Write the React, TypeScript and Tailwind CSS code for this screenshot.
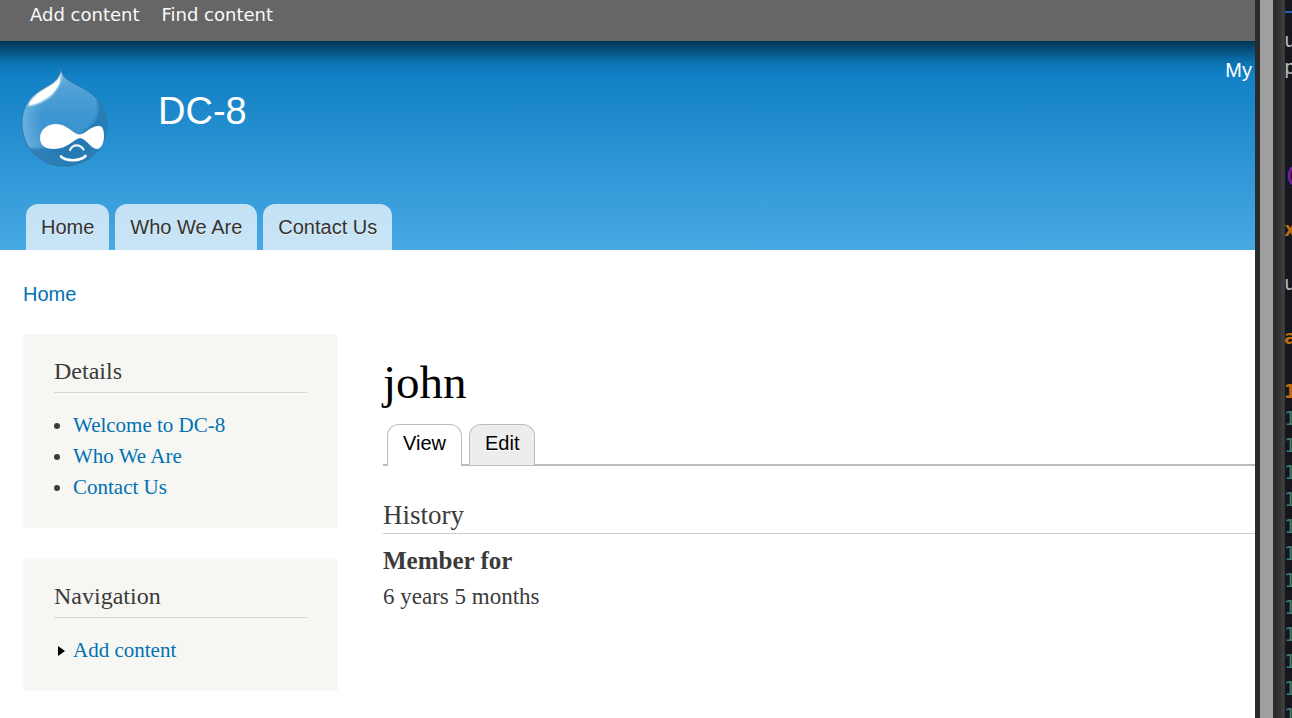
import type { ReactNode } from "react";
import { clsx } from "clsx";

const menu = ["Home", "Who We Are", "Contact Us"];
const details = ["Welcome to DC-8", "Who We Are", "Contact Us"];

const editorLines = [
  { text: "u", color: "text-[#b8b8b8]" },
  { text: "p", color: "text-[#b8b8b8]" },
  { text: "", color: "" },
  { text: "", color: "" },
  { text: "", color: "" },
  { text: "(", color: "text-[#7a1fa2] font-bold" },
  { text: "", color: "" },
  { text: "x", color: "text-[#c06a14] font-bold" },
  { text: "", color: "" },
  { text: "u", color: "text-[#b8b8b8]" },
  { text: "", color: "" },
  { text: "a", color: "text-[#c06a14] font-bold" },
  { text: "", color: "" },
  { text: "1", color: "text-[#c06a14] font-bold" },
  ...Array.from({ length: 12 }, () => ({ text: "1", color: "text-[#3c7f70]" })),
];

const Logo = () => (
  <svg viewBox="10 9 89 100" className="h-[100px] w-[89px]" aria-hidden="true">
    <defs>
      <linearGradient id="body" x1="0" y1="0" x2="0" y2="1">
        <stop offset="0" stopColor="#5fa9d9" />
        <stop offset="0.45" stopColor="#3f97d2" />
        <stop offset="0.8" stopColor="#3a91cd" />
        <stop offset="1" stopColor="#2a80be" />
      </linearGradient>
      <radialGradient id="sheen" cx="0.56" cy="0.5" r="0.52">
        <stop offset="0.6" stopColor="#8ccbf0" stopOpacity="0" />
        <stop offset="1" stopColor="#a5d5f2" stopOpacity="0.4" />
      </radialGradient>
      <filter id="soft" x="-20%" y="-20%" width="140%" height="140%">
        <feGaussianBlur stdDeviation="0.9" />
      </filter>
      <clipPath id="drop">
        <path d="M51 9C52 17 56 20 62 23.500C75 30 85 35 91 46C95 52 97 59 97 65C97 89 78 107 54.500 107C30 107 12 89 12 64C12 51 17 41 27 33.500C38 26 50 23 51 9Z" />
      </clipPath>
    </defs>
    <g clipPath="url(#drop)">
      <rect x="10" y="9" width="89" height="100" fill="url(#body)" />
      <rect x="10" y="9" width="89" height="100" fill="url(#sheen)" />
      <path
        d="M86 40C91 52 87 62 79 68C74 72 69 76 69 79C55 88 40 90 16 89C24 104 44 112 62 110C84 107 100 90 100 66C100 52 95 44 86 40Z"
        fill="#1c70aa"
        fillOpacity="0.7"
        filter="url(#soft)"
      />
      <path
        d="M51 11C52 23 48 29 42 36C35 42 26 46 18 47C20 40 28 33 38 27C46 23 50 19 51 11Z"
        fill="#fff"
        filter="url(#soft)"
      />
      <path d="M50 18C50 26 46 31 41 35C34 41 27 45 19 46C21 40 30 34 37 29C45 25 49 23 50 18Z" fill="#fff" />
    </g>
    <path
      d="M51 9C52 17 56 20 62 23.500C75 30 85 35 91 46C95 52 97 59 97 65C97 89 78 107 54.500 107C30 107 12 89 12 64C12 51 17 41 27 33.500C38 26 50 23 51 9Z"
      fill="none"
      stroke="#2a6f9e"
      strokeOpacity="0.75"
    />
    <path
      d="M30 79C30 70 38 65 46 65C57 65 63 75 69.500 75.500C76 75 80 67 89 67C93 67 94 72 94 77C94 84 91 90 87 90C81 90 77 80 70 79C63 80 58 90 44 90C36 90 30 87 30 79Z"
      fill="#fff"
    />
    <path d="M60 91C63 85 70 85 73.500 90.500" fill="none" stroke="#e8f2f9" strokeWidth="2.2" strokeLinecap="round" />
    <path d="M51 97.500C56 102.500 70 102.500 75.500 97" fill="none" stroke="#fff" strokeWidth="2.6" strokeLinecap="round" />
  </svg>
);

const Block = ({ title, children }: { title: string; children: ReactNode }) => (
  <section className="border border-[#f9f9f9] bg-[#f6f6f2] px-[30px] pt-5 pb-6">
    <h2 className="border-b border-[#d6d6d6] pb-[5px] text-2xl leading-8 text-[#3b3b3b]">{title}</h2>
    <ul className="mt-[17px] text-[21px] leading-[31px] text-[#0071b3]">{children}</ul>
  </section>
);

const EditorStrip = () => (
  <aside className="flex w-[37px] shrink-0 overflow-hidden bg-[#2b2b2b]">
    <div className="mx-[5px] w-[13px] shrink-0 bg-[#9f9f9f]" />
    <div className="w-[3px] shrink-0 bg-[#333333]" />
    <div className="w-1 shrink-0 bg-[#3c3c3d]" />
    <div className="min-w-0 flex-1 overflow-hidden bg-[#16171e] pt-[11px] font-['DejaVu_Sans_Mono',monospace] text-xl leading-[27px]">
      <div className="mb-3.5 h-0.5 bg-[#2a5db0]" />
      {editorLines.map((line, i) => (
        <div key={i} className={clsx("-ml-px h-[27px]", line.color)}>
          {line.text}
        </div>
      ))}
    </div>
  </aside>
);

export default function App() {
  return (
    <div className="flex h-screen overflow-hidden bg-white font-['Liberation_Serif',serif]">
      <div className="min-w-0 flex-1 overflow-hidden">
        <nav className="flex h-[41px] gap-[22px] bg-[#666] px-[30px] pt-[3px] font-['DejaVu_Sans',sans-serif] text-lg leading-6 text-[#fafafa]">
          <a href="#add">Add content</a>
          <a href="#find">Find content</a>
        </nav>

        <header className="bg-[linear-gradient(#001018a8,#00101860_10px,#00101818_22px,#00101800_34px),linear-gradient(#0779bf,#48a9e4)] font-['Liberation_Sans',sans-serif]">
          <div className="flex items-start pt-[15px] pr-[3px] pl-5 text-white">
            <a href="#home" aria-label="Home" className="mt-3">
              <Logo />
            </a>
            <a href="#home" className="mt-8 ml-[49px] text-[38px] leading-[46px]">
              DC-8
            </a>
            <a href="#account" className="ml-auto text-xl leading-7">
              My
            </a>
          </div>
          <nav className="mt-9 flex gap-1.5 pl-[26px] text-xl leading-[46px] text-[#333]">
            {menu.map((item) => (
              <a
                key={item}
                href="#menu"
                className="rounded-t-xl bg-white/70 px-[15px] [text-shadow:0_1px_#eee]"
              >
                {item}
              </a>
            ))}
          </nav>
        </header>

        <div className="pl-[23px]">
          <nav className="pt-[30px] font-['Liberation_Sans',sans-serif] text-xl leading-7 text-[#0071b3]">
            <a href="#home">Home</a>
          </nav>

          <div className="mt-[26px] flex gap-[45px]">
            <div className="flex w-[315px] shrink-0 flex-col gap-[31px]">
              <Block title="Details">
                {details.map((item) => (
                  <li key={item} className="flex items-center gap-[13px]">
                    <span className="size-1.5 rounded-full bg-[#3b3b3b]" />
                    <a href="#details">{item}</a>
                  </li>
                ))}
              </Block>
              <Block title="Navigation">
                <li className="flex items-center gap-2">
                  <svg viewBox="0 0 7 10" className="ml-1 h-2.5 w-[7px]" aria-hidden="true">
                    <path d="M0 0L7 5L0 10Z" fill="#000" />
                  </svg>
                  <a href="#add">Add content</a>
                </li>
              </Block>
            </div>

            <main className="min-w-0 flex-1 pt-[22px] text-[#3b3b3b]">
              <h1 className="text-[47px] leading-[52px] text-black">john</h1>
              <div className="mt-4 flex items-end gap-[7px] border-b-2 border-[#bbb] pl-1 font-['Liberation_Sans',sans-serif] text-xl text-black">
                <a
                  href="#view"
                  className="-mb-0.5 h-[42px] rounded-t-xl border border-b-0 border-[#bbb] bg-white px-[15px] leading-9"
                >
                  View
                </a>
                <a
                  href="#edit"
                  className="-mb-px h-[41px] rounded-t-xl border border-b-0 border-[#bbb] bg-[#ededed] px-[15px] leading-9 [text-shadow:0_1px_#fff]"
                >
                  Edit
                </a>
              </div>
              <h3 className="mt-8 border-b border-[#ccc] text-[27px] leading-[35px]">History</h3>
              <dl className="mt-[9px] leading-9">
                <dt className="text-[25px] leading-9 font-bold">Member for</dt>
                <dd className="text-[23px] leading-9">6 years 5 months</dd>
              </dl>
            </main>
          </div>
        </div>
      </div>
      <EditorStrip />
    </div>
  );
}
